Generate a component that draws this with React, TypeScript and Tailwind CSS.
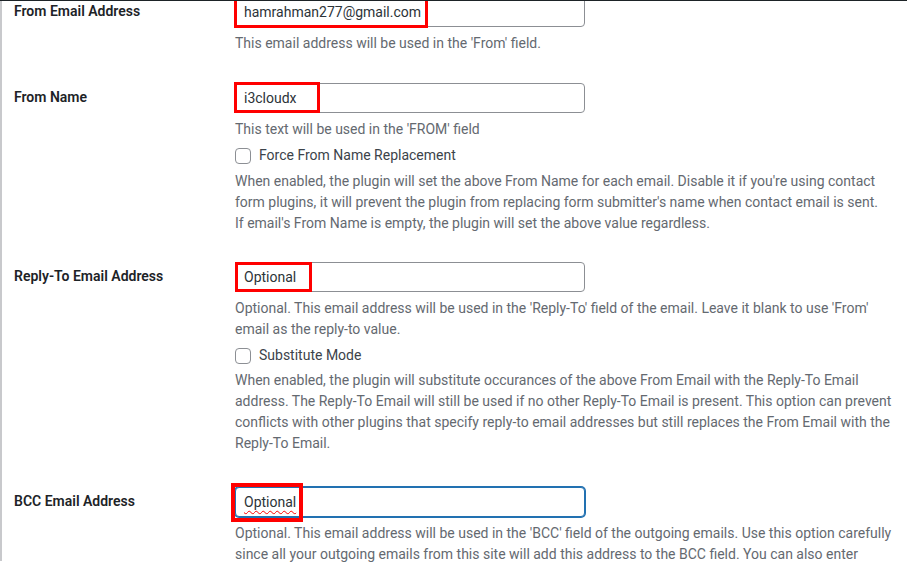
import React from 'react'

const font = { fontFamily: '"Segoe UI", Roboto, "Liberation Sans", sans-serif' }

interface FieldProps {
  value: string
  focused?: boolean
  squiggle?: boolean
  mark: string
}

// text box styled like the WP admin regular-text input, with the red annotation box over it
function Field({ value, focused, squiggle, mark }: FieldProps) {
  return (
    <div
      className={`relative h-[30px] w-[350px] rounded-[4px] bg-white px-2 flex items-center text-[14px] text-[#2c3338] ${
        focused ? 'border border-[#2271b1] shadow-[0_0_0_1px_#2271b1]' : 'border border-[#8c8f94]'
      }`}
    >
      <span className={squiggle ? 'underline decoration-wavy decoration-[#f00] decoration-1 underline-offset-[3px]' : ''}>
        {value}
      </span>
      <div className={`absolute pointer-events-none ${mark}`} />
    </div>
  )
}

function Checkbox({ label }: { label: string }) {
  return (
    <div className="mt-[5px] flex h-[21px] items-center gap-2 text-[14px] text-[#3c434a]">
      <span className="h-4 w-4 rounded-[4px] border border-[#8c8f94] bg-white" />
      <span>{label}</span>
    </div>
  )
}

function Lines({ lines, className }: { lines: string[]; className?: string }) {
  return (
    <div className={`text-[14px] leading-[21px] text-[#646970] whitespace-nowrap ${className || ''}`}>
      {lines.map((l, i) => (
        <div key={i}>{l}</div>
      ))}
    </div>
  )
}

function Row({ label, children, className }: { label: string; children: React.ReactNode; className?: string }) {
  return (
    <div className={`flex ${className || ''}`}>
      <div className="w-[231px] shrink-0 pl-3 pt-[4px] text-[14px] leading-[20px] font-semibold text-[#1d2327]">
        {label}
      </div>
      <div className="flex-1 pl-[2px]">{children}</div>
    </div>
  )
}

export default function App() {
  return (
    <div style={font} className="h-[565px] w-[907px] overflow-hidden bg-white border-t border-[#1d2327]">
      <div className="h-full border-l-2 border-[#c8c9cc]">
        <Row label="From Email Address" className="-mt-[4px]">
          <Field value="hamrahman277@gmail.com" mark="-left-[2px] -top-[5px] h-[35px] w-[194px] border-[3px] border-[#f00]" />
          <Lines className="mt-[6px]" lines={["This email address will be used in the 'From' field."]} />
        </Row>

        <Row label="From Name" className="mt-[29px]">
          <Field value="i3cloudx" mark="-left-[2px] -top-[2px] h-[31px] w-[86px] border-[3px] border-[#f00]" />
          <Lines className="mt-[6px]" lines={["This text will be used in the 'FROM' field"]} />
          <Checkbox label="Force From Name Replacement" />
          <Lines
            className="mt-[5px]"
            lines={[
              "When enabled, the plugin will set the above From Name for each email. Disable it if you're using contact",
              "form plugins, it will prevent the plugin from replacing form submitter's name when contact email is sent.",
              "If email's From Name is empty, the plugin will set the above value regardless.",
            ]}
          />
        </Row>

        <Row label="Reply-To Email Address" className="mt-[28px]">
          <Field value="Optional" mark="-left-px -top-px h-[30px] w-[77px] border-[3px] border-[#f00]" />
          <Lines
            className="mt-[6px]"
            lines={[
              "Optional. This email address will be used in the 'Reply-To' field of the email. Leave it blank to use 'From'",
              'email as the reply-to value.',
            ]}
          />
          <Checkbox label="Substitute Mode" />
          <Lines
            className="mt-[4px]"
            lines={[
              'When enabled, the plugin will substitute occurances of the above From Email with the Reply-To Email',
              'address. The Reply-To Email will still be used if no other Reply-To Email is present. This option can prevent',
              'conflicts with other plugins that specify reply-to email addresses but still replaces the From Email with the',
              'Reply-To Email.',
            ]}
          />
        </Row>

        <Row label="BCC Email Address" className="mt-[33px]">
          <Field
            value="Optional"
            focused
            squiggle
            mark="-left-[5px] -top-[5px] h-[39px] w-[72px] border-[4px] border-[#f00]"
          />
          <Lines
            className="mt-[6px]"
            lines={[
              "Optional. This email address will be used in the 'BCC' field of the outgoing emails. Use this option carefully",
              'since all your outgoing emails from this site will add this address to the BCC field. You can also enter',
            ]}
          />
        </Row>
      </div>
    </div>
  )
}
